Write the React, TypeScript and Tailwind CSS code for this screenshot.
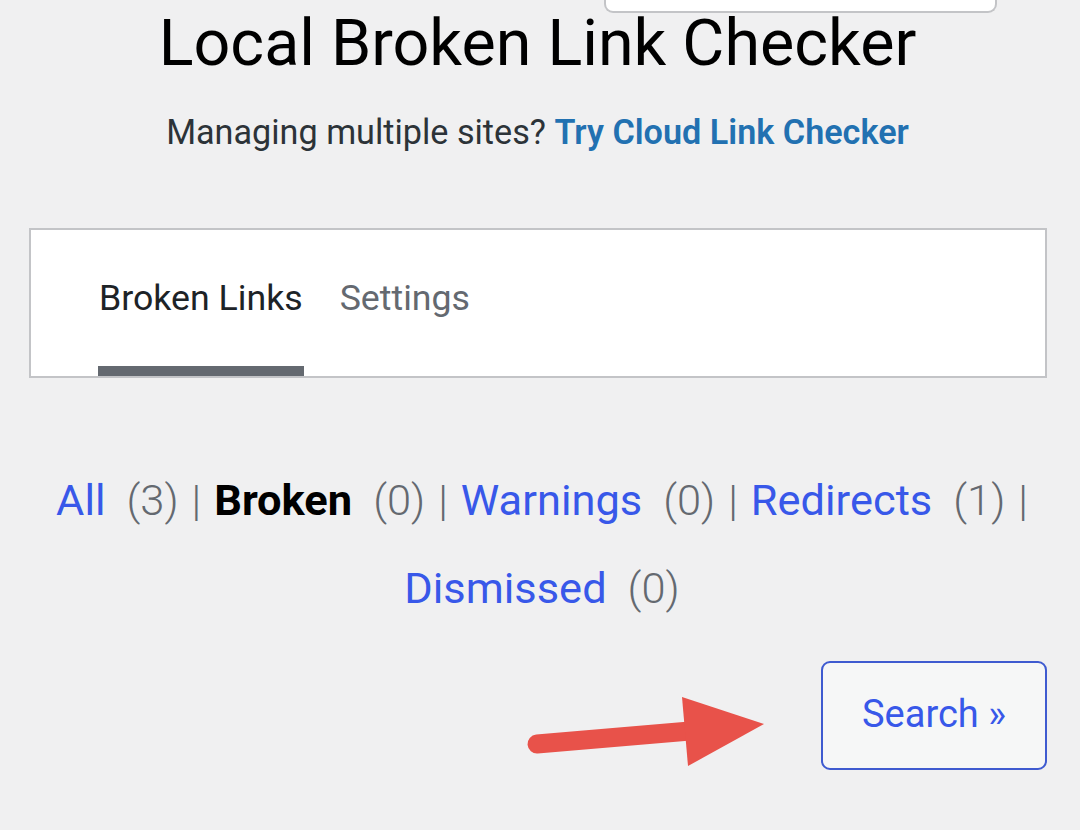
import React from "react";

export default function App() {
  return (
    <div
      className="relative w-[1080px] h-[830px] overflow-hidden bg-[#f0f0f1] text-[#1d2327]"
      style={{ fontFamily: "Roboto, 'Noto Sans', sans-serif" }}
    >
      {/* top floating box (cut off) */}
      <div className="flex justify-end pr-[83px]">
        <div className="w-[393px] h-[13px] bg-white border-x-2 border-b-2 border-[#c3c4c7] rounded-b-[9px]" />
      </div>

      {/* title */}
      <h1 className="-mt-[2px] pr-[5px] text-center text-[64.6px] leading-[64px] font-normal text-black">
        Local Broken Link Checker
      </h1>

      {/* subtitle */}
      <p className="mt-[33px] pr-[5px] text-center text-[34.2px] leading-[48px] text-[#2c3338]">
        Managing multiple sites?{" "}
        <a className="font-semibold text-[#2271b1]">Try Cloud Link Checker</a>
      </p>

      {/* tabs card */}
      <div className="mt-[72px] ml-[29px] w-[1018px] h-[150px] bg-white border-2 border-[#c3c4c7] flex items-end pl-[67px] gap-[36px]">
        <div className="flex flex-col items-stretch">
          <span className="px-px text-[35.7px] leading-[40px] text-[#1d2327]">Broken Links</span>
          <div className="mt-[48px] h-[10px] bg-[#646970]" />
        </div>
        <div className="flex flex-col items-stretch">
          <span className="text-[35.7px] leading-[40px] text-[#646970]">Settings</span>
          <div className="mt-[48px] h-[10px]" />
        </div>
      </div>

      {/* filters */}
      <div className="mt-[79px] text-[43.4px] leading-[88px] pl-[4px]">
        <div className="flex justify-center items-baseline whitespace-pre">
          <a className="text-[#3858e9]">All</a>
          <span className="ml-[21px] font-light text-[#646970]">(3)</span>
          <span className="mx-[13px] font-light text-[#646970]">|</span>
          <span className="font-bold text-black">Broken</span>
          <span className="ml-[21px] font-light text-[#646970]">(0)</span>
          <span className="mx-[13px] font-light text-[#646970]">|</span>
          <a className="text-[#3858e9]">Warnings</a>
          <span className="ml-[21px] font-light text-[#646970]">(0)</span>
          <span className="mx-[13px] font-light text-[#646970]">|</span>
          <a className="text-[#3858e9]">Redirects</a>
          <span className="ml-[21px] font-light text-[#646970]">(1)</span>
          <span className="ml-[13px] font-light text-[#646970]">|</span>
        </div>
        <div className="flex justify-center items-baseline whitespace-pre">
          <a className="text-[#3858e9]">Dismissed</a>
          <span className="ml-[21px] font-light text-[#646970]">(0)</span>
        </div>
      </div>

      {/* search button */}
      <div className="mt-[28px] flex justify-end pr-[33px]">
        <button className="w-[226px] h-[109px] pb-[3px] rounded-[9px] border-2 border-[#3f5bd0] bg-[#f6f7f7] text-[#3858e9] text-[38px] leading-none">
          Search »
        </button>
      </div>

      {/* annotation arrow */}
      <svg
        className="absolute left-0 top-0 pointer-events-none"
        width="1080"
        height="830"
        viewBox="0 0 1080 830"
      >
        <line
          x1="537"
          y1="744"
          x2="690"
          y2="731"
          stroke="#e8524a"
          strokeWidth="19"
          strokeLinecap="round"
        />
        <polygon points="682,697 764,724 688,766" fill="#e8524a" />
      </svg>
    </div>
  );
}
